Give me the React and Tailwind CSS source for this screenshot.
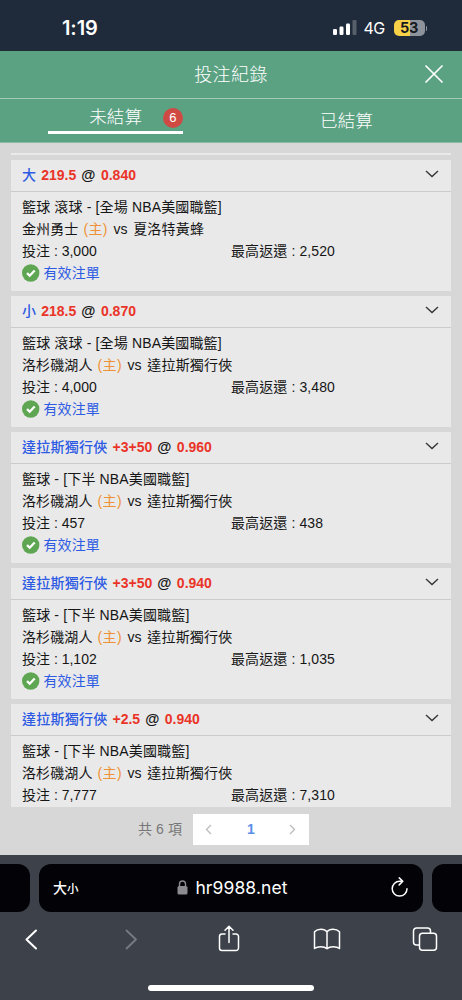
const bets = [
  { pick: '大', odds: '0.840', line: '219.5', league: '籃球 滾球 - [全場 NBA美國職籃]', home: '金州勇士', away: '夏洛特黃蜂', stake: '3,000', payout: '2,520', status: '有效注單' },
  { pick: '小', odds: '0.870', line: '218.5', league: '籃球 滾球 - [全場 NBA美國職籃]', home: '洛杉磯湖人', away: '達拉斯獨行俠', stake: '4,000', payout: '3,480', status: '有效注單' },
  { pick: '達拉斯獨行俠', odds: '0.960', line: '+3+50', league: '籃球 - [下半 NBA美國職籃]', home: '洛杉磯湖人', away: '達拉斯獨行俠', stake: '457', payout: '438', status: '有效注單' },
  { pick: '達拉斯獨行俠', odds: '0.940', line: '+3+50', league: '籃球 - [下半 NBA美國職籃]', home: '洛杉磯湖人', away: '達拉斯獨行俠', stake: '1,102', payout: '1,035', status: '有效注單' },
  { pick: '達拉斯獨行俠', odds: '0.940', line: '+2.5', league: '籃球 - [下半 NBA美國職籃]', home: '洛杉磯湖人', away: '達拉斯獨行俠', stake: '7,777', payout: '7,310' },
];

function StatusBar() {
  return (
    <div className="h-[51px] shrink-0 bg-[#1f2a3a] text-white flex items-center justify-between pl-[62px] pr-[35px] pt-[5px]">
      <span className="font-['Inter'] text-[20px] font-semibold tracking-[-0.1px]">1:19</span>
      <div className="flex items-center">
        <svg width="24" height="15" viewBox="0 0 24 15" fill="currentColor" className="-mt-px">
          <rect x="0" y="9" width="4" height="6" rx="1.2" />
          <rect x="6.5" y="6.5" width="4" height="8.5" rx="1.2" />
          <rect x="13" y="3.5" width="4" height="11.5" rx="1.2" />
          <rect x="19.5" y="0" width="4" height="15" rx="1.2" opacity="0.25" />
        </svg>
        <span className="font-['Inter'] text-base leading-4 ml-[7px] w-[22px] tracking-[-0.5px]">4G</span>
        <div className="ml-2 -mt-px h-4 w-[31px] rounded-[5px] bg-[linear-gradient(90deg,#f7d147_53%,#8e929b_53%)] text-[#14181f] font-['Inter'] text-[14.5px] leading-4 font-bold text-center tracking-[-0.3px]">
          53
        </div>
        <div className="ml-px h-[5px] w-[1.5px] rounded-r bg-[#8e929b]" />
      </div>
    </div>
  );
}

function Header() {
  return (
    <header className="shrink-0 bg-[#5ba283] text-white font-light">
      <div className="grid grid-cols-[60px_1fr_60px] items-center h-12 border-b border-[#a3cbb8]">
        <h1 className="col-start-2 text-center text-[18px] font-light tracking-[0.4px] pt-0.5">投注紀錄</h1>
        <button className="flex justify-end pr-[19px]" aria-label="close">
          <svg width="18" height="18" viewBox="0 0 18 18" stroke="currentColor" strokeWidth="1.7" strokeLinecap="round" className="-mt-px">
            <path d="M1 1l16 16M17 1L1 17" />
          </svg>
        </button>
      </div>
      <nav className="grid grid-cols-2 h-11 border-b border-[#8bb9a3] text-[17.5px]">
        <div className="flex justify-center">
          <div className="w-[135px] h-[35px] border-b-[3px] border-white flex items-center justify-end gap-[21px] pt-[5px]">
            <span>未結算</span>
            <span className="size-5 rounded-full bg-[#cf4a43] text-[13px] leading-5 text-center">6</span>
          </div>
        </div>
        <div className="flex items-center justify-center pt-px">已結算</div>
      </nav>
    </header>
  );
}

function BetCard({ bet }) {
  return (
    <article className="h-[131px] shrink-0 bg-[#e9e9e9]">
      <div className="flex items-center justify-between h-8 pl-[11px] pr-3 border-b border-[#cbcbcb]">
        <div className="flex items-baseline gap-[5px] font-bold">
          <span className="text-[#2d5be3] font-medium tracking-[0.25px]">{bet.pick}</span>
          <span className="text-[#ea3428] tracking-normal">{bet.line}</span>
          <span className="tracking-normal font-semibold text-[14.5px] leading-5">@</span>
          <span className="text-[#ea3428] tracking-normal ml-[0.5px]">{bet.odds}</span>
        </div>
        <svg width="14" height="8" viewBox="0 0 14 8" fill="none" stroke="#333" strokeWidth="1.3" className="-mt-[3px]">
          <path d="M1 1l6 5.5L13 1" />
        </svg>
      </div>
      <div className="px-[11px] pt-1 leading-[22px]">
        <p className="tracking-[0.15px]">{bet.league}</p>
        <p>
          {bet.home} <span className="text-[#ef9134] ml-px mr-[1.5px] tracking-[0.4px]">(主)</span> vs{' '}
          <span className="ml-[1.5px] tracking-[0.2px]">{bet.away}</span>
        </p>
        <div className="grid grid-cols-2">
          <p className="tracking-normal">投注 : {bet.stake}</p>
          <p className="tracking-[0.1px]">最高返還 : {bet.payout}</p>
        </div>
        {bet.status && (
          <div className="flex items-center gap-1 -ml-[0.5px] text-[#2d5be3]">
            <svg width="18" height="18" viewBox="0 0 18 18">
              <circle cx="8.7" cy="9" r="8.7" fill="#5fa653" />
              <path d="M5 9.1l2.7 2.6 5-5.2" fill="none" stroke="#fff" strokeWidth="2.3" />
            </svg>
            <span>{bet.status}</span>
          </div>
        )}
      </div>
    </article>
  );
}

function Pagination() {
  return (
    <div className="h-12 shrink-0 flex items-start pt-[7px] pl-[138px] text-[#777]">
      <span className="w-[55px] leading-[30px] text-[14px] tracking-[0.1px]">共 6 項</span>
      <div className="flex items-center justify-between w-[116px] h-[31px] bg-white px-3 text-[#bbb]">
        <svg width="8" height="11" viewBox="0 0 8 11" fill="none" stroke="currentColor" strokeWidth="1.3">
          <path d="M6 1L1.5 5.5 6 10" />
        </svg>
        <span className="text-[#5a8ee8] text-[14px] font-bold">1</span>
        <svg width="8" height="11" viewBox="0 0 8 11" fill="none" stroke="currentColor" strokeWidth="1.3">
          <path d="M1 1l4.5 4.5L1 10" />
        </svg>
      </div>
    </div>
  );
}

function BrowserBar() {
  return (
    <footer className="h-[145px] shrink-0 bg-[#3d4149] text-white pt-[9px] flex flex-col items-center">
      <div className="flex w-full justify-between">
        <div className="h-12 w-[30px] rounded-r-xl bg-[#020207]" />
        <div className="h-12 w-96 rounded-xl bg-[#020207] flex items-center justify-between pl-[14px] pr-[15px]">
          <span className="w-10 flex items-baseline font-medium text-[14px] tracking-normal">
            大<span className="text-[11.5px]">小</span>
          </span>
          <span className="flex items-center gap-[7px] font-['Inter'] text-[17.5px] tracking-[0.1px] -ml-[7px] pt-px">
            <svg width="11" height="15" viewBox="0 0 11 15" className="-mt-0.5">
              <rect x="0.5" y="6" width="10" height="8.5" rx="1.5" fill="#8b8b90" />
              <path d="M2.5 6V4a3 3 0 016 0v2" fill="none" stroke="#8b8b90" strokeWidth="1.4" />
            </svg>
            hr9988.net
          </span>
          <span className="w-[29px] flex justify-end">
            <svg width="17" height="20" viewBox="0 0 17 20" fill="none" stroke="currentColor" strokeWidth="1.5" strokeLinecap="round" strokeLinejoin="round" className="-mt-[3px]">
              <path d="M11.5 4.3H8.6a7.4 7.4 0 107.4 7.4M8.2.9l3.6 3.4-3.6 3.6" />
            </svg>
          </span>
        </div>
        <div className="h-12 w-[30px] rounded-l-xl bg-[#020207]" />
      </div>
      <div className="mt-[13px] w-full flex items-center justify-between pl-[18px] pr-[23px]">
        <svg width="28" height="28" viewBox="0 0 28 28" fill="none" stroke="currentColor" strokeWidth="2" strokeLinecap="round" strokeLinejoin="round">
          <path d="M18 5.5l-9.500 9 9.500 9" />
        </svg>
        <svg width="28" height="28" viewBox="0 0 28 28" fill="none" stroke="#777b83" strokeWidth="1.8" strokeLinecap="round" strokeLinejoin="round">
          <path d="M10.500 5.500l9.500 9-9.500 9" />
        </svg>
        <svg width="28" height="28" viewBox="0 0 28 28" fill="none" stroke="currentColor" strokeWidth="1.5" strokeLinecap="round" strokeLinejoin="round">
          <path d="M10 9H7a2.500 2.500 0 00-2.500 2.500v11.500A2.500 2.500 0 007 25.500h14a2.500 2.500 0 002.500-2.500v-11.500A2.500 2.500 0 0021 9h-3M14 17.500V1.500M10 5.300L14 1.300l4 4" />
        </svg>
        <svg width="28" height="28" viewBox="0 0 28 28" fill="none" stroke="currentColor" strokeWidth="1.5" strokeLinecap="round" strokeLinejoin="round">
          <path d="M14 6.800C12.600 4.900 10.700 4.200 8 4.200S3 5.200 1.500 6.800V23.500c1.500-1.200 3.500-1.700 6.300-1.700s4.800.6 6.200 1.900c1.400-1.300 3.500-1.900 6.200-1.900s4.800.5 6.300 1.700V6.800C25 5.200 22.700 4.200 20 4.200S15.400 4.900 14 6.800zM14 6.800v17" />
        </svg>
        <svg width="28" height="28" viewBox="0 0 28 28" fill="none" stroke="currentColor" strokeWidth="1.5">
          <rect x="8.500" y="8.200" width="17" height="17" rx="3" />
          <path d="M8.500 20H5.500a3 3 0 01-3-3V6a3 3 0 013-3h11a3 3 0 013 3v2.200" />
        </svg>
      </div>
      <div className="mt-[32px] h-[6px] w-[166px] rounded-full bg-white" />
    </footer>
  );
}

export default function App() {
  return (
    <div className="w-[462px] h-[1000px] overflow-hidden flex flex-col bg-[#d7d7d7] font-['Liberation_Sans','Noto_Sans_CJK_TC',sans-serif] text-[14px] tracking-[0.1px] text-[#161616]">
      <StatusBar />
      <Header />
      <main className="h-[664px] shrink-0 overflow-hidden pt-[10px] px-[11px] flex flex-col gap-[5px]">
        <div className="h-[2px] shrink-0 bg-[#e9e9e9]" />
        {bets.map((bet, i) => (
          <BetCard key={i} bet={bet} />
        ))}
      </main>
      <Pagination />
      <BrowserBar />
    </div>
  );
}
